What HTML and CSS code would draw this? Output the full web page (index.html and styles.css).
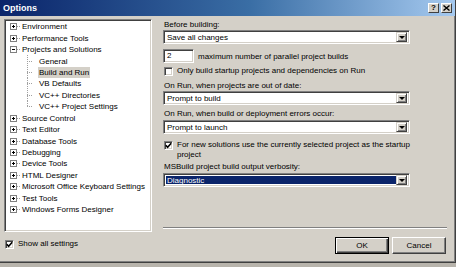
FILE: index.html
```html
<!DOCTYPE html>
<html lang="en">
<head>
  <meta charset="UTF-8">
  <title>Options</title>
  <link rel="stylesheet" href="styles.css">
</head>
<body>
  <div class="dialog">
    <div class="titlebar">
      <span class="title">Options</span>
      <div class="caption-btns">
        <span class="cap-btn help">?</span>
        <span class="cap-btn close">
          <svg width="7" height="6" viewBox="0 0 7 6"><path d="M0.5 0.5 L6.5 5.5 M6.5 0.5 L0.5 5.5" stroke="#000" stroke-width="1.4"/></svg>
        </span>
      </div>
    </div>

    <div class="body">
      <div class="left">
        <ul class="tree">
          <li class="node plus"><span class="box"></span><span class="lbl">Environment</span></li>
          <li class="node plus"><span class="box"></span><span class="lbl">Performance Tools</span></li>
          <li class="node minus"><span class="box"></span><span class="lbl">Projects and Solutions</span></li>
          <li class="child"><span class="lbl">General</span></li>
          <li class="child"><span class="lbl selected">Build and Run</span></li>
          <li class="child"><span class="lbl">VB Defaults</span></li>
          <li class="child"><span class="lbl">VC++ Directories</span></li>
          <li class="child last"><span class="lbl">VC++ Project Settings</span></li>
          <li class="node plus"><span class="box"></span><span class="lbl">Source Control</span></li>
          <li class="node plus"><span class="box"></span><span class="lbl">Text Editor</span></li>
          <li class="node plus"><span class="box"></span><span class="lbl">Database Tools</span></li>
          <li class="node plus"><span class="box"></span><span class="lbl">Debugging</span></li>
          <li class="node plus"><span class="box"></span><span class="lbl">Device Tools</span></li>
          <li class="node plus"><span class="box"></span><span class="lbl">HTML Designer</span></li>
          <li class="node plus"><span class="box"></span><span class="lbl">Microsoft Office Keyboard Settings</span></li>
          <li class="node plus"><span class="box"></span><span class="lbl">Test Tools</span></li>
          <li class="node plus"><span class="box"></span><span class="lbl">Windows Forms Designer</span></li>
        </ul>
        <div class="check-row show-all">
          <span class="checkbox checked">
            <svg width="7" height="7" viewBox="0 0 7 7"><path d="M0.8 3.2 L2.6 5.2 L6.2 1.2" fill="none" stroke="#000" stroke-width="1.6"/></svg>
          </span>
          <span>Show all settings</span>
        </div>
      </div>

      <div class="right">
        <div class="label">Before building:</div>
        <div class="combo">
          <span class="combo-text">Save all changes</span>
          <span class="drop"><span class="arrow"></span></span>
        </div>

        <div class="num-row">
          <span class="numbox">2</span>
          <span>maximum number of parallel project builds</span>
        </div>

        <div class="check-row opt1">
          <span class="checkbox"></span>
          <span>Only build startup projects and dependencies on Run</span>
        </div>

        <div class="label l2">On Run, when projects are out of date:</div>
        <div class="combo">
          <span class="combo-text">Prompt to build</span>
          <span class="drop"><span class="arrow"></span></span>
        </div>

        <div class="label l3">On Run, when build or deployment errors occur:</div>
        <div class="combo c3">
          <span class="combo-text">Prompt to launch</span>
          <span class="drop"><span class="arrow"></span></span>
        </div>

        <div class="check-row opt2">
          <span class="checkbox checked">
            <svg width="7" height="7" viewBox="0 0 7 7"><path d="M0.8 3.2 L2.6 5.2 L6.2 1.2" fill="none" stroke="#000" stroke-width="1.6"/></svg>
          </span>
          <span class="wrap">For new solutions use the currently selected project as the startup project</span>
        </div>

        <div class="label l4">MSBuild project build output verbosity:</div>
        <div class="combo c4">
          <span class="combo-text focused">Diagnostic</span>
          <span class="drop"><span class="arrow"></span></span>
        </div>

        <div class="spacer"></div>
        <div class="separator"></div>
        <div class="buttons">
          <button class="btn default">OK</button>
          <button class="btn">Cancel</button>
        </div>
      </div>
    </div>
  </div>
  <div class="under"></div>
</body>
</html>
```

FILE: styles.css
```css
* {
  box-sizing: border-box;
}

body {
  margin: 0;
  width: 456px;
  height: 267px;
  overflow: hidden;
  background: #8c8a86;
  font-family: 'Liberation Sans', Arial, sans-serif;
  font-size: 8px;
  color: #000;
}

.dialog {
  width: 456px;
  height: 263px;
  background: #d4d0c8;
  border-right: 1px solid #404040;
  border-bottom: 1px solid #404040;
  box-shadow: inset -1px -1px 0 #808080;
  display: flex;
  flex-direction: column;
}

/* title bar */
.titlebar {
  height: 16px;
  flex: none;
  display: flex;
  align-items: center;
  justify-content: space-between;
  padding: 0 3px 1px 3px;
  background: linear-gradient(to right, #0a246a, #3a6ea5 55%, #a6caf0);
}

.title {
  color: #fff;
  font-weight: bold;
  font-size: 9px;
}

.caption-btns {
  display: flex;
  gap: 2px;
}

.cap-btn {
  width: 11px;
  height: 10px;
  background: #d4d0c8;
  border-top: 1px solid #fff;
  border-left: 1px solid #fff;
  border-right: 1px solid #404040;
  border-bottom: 1px solid #404040;
  display: flex;
  align-items: center;
  justify-content: center;
  font-weight: bold;
  font-size: 8px;
  line-height: 1;
}

.body {
  flex: 1;
  display: flex;
}

/* left side */
.left {
  width: 160px;
  padding: 3px 0 0 4px;
  display: flex;
  flex-direction: column;
}

.tree {
  list-style: none;
  margin: 0;
  padding: 1px 0 0 5px;
  width: 148px;
  height: 213px;
  background: #fff;
  border-top: 1px solid #808080;
  border-left: 1px solid #808080;
  border-right: 1px solid #fff;
  border-bottom: 1px solid #fff;
  box-shadow: inset 1px 1px 0 #404040, inset -1px -1px 0 #d4d0c8;
}

.tree li {
  height: 11.44px;
  display: flex;
  align-items: center;
  white-space: nowrap;
}

.box {
  width: 7px;
  height: 7px;
  flex: none;
  border: 1px solid #808080;
  margin-right: 4px;
  background:
    linear-gradient(#000, #000) center / 3px 1px no-repeat,
    #fff;
}

.plus .box {
  background:
    linear-gradient(#000, #000) center / 3px 1px no-repeat,
    linear-gradient(#000, #000) center / 1px 3px no-repeat,
    #fff;
}

.node {
  background: repeating-linear-gradient(to right, #a0a0a0 0 1px, transparent 1px 2px) 7px 50% / 4px 1px no-repeat;
}

.node .lbl {
  padding-left: 1px;
}

.tree .child {
  padding-left: 28px;
  background:
    repeating-linear-gradient(to bottom, #a0a0a0 0 1px, transparent 1px 2px) 17px 0 / 1px 100% no-repeat,
    repeating-linear-gradient(to right, #a0a0a0 0 1px, transparent 1px 2px) 17px 50% / 6px 1px no-repeat;
}

.tree .child.last {
  background:
    repeating-linear-gradient(to bottom, #a0a0a0 0 1px, transparent 1px 2px) 17px 0 / 1px 50% no-repeat,
    repeating-linear-gradient(to right, #a0a0a0 0 1px, transparent 1px 2px) 17px 50% / 6px 1px no-repeat;
}

.child .lbl {
  padding: 0 1px;
  line-height: 11px;
}

.lbl.selected {
  background: #d4d0c8;
}

.check-row {
  display: flex;
  align-items: flex-start;
  gap: 4px;
  line-height: 10px;
}

.show-all {
  margin-top: 7px;
  padding-left: 1px;
}

.checkbox {
  width: 9px;
  height: 9px;
  flex: none;
  margin-top: 0.5px;
  background: #fff;
  border-top: 1px solid #808080;
  border-left: 1px solid #808080;
  border-right: 1px solid #fff;
  border-bottom: 1px solid #fff;
  box-shadow: inset 1px 1px 0 #404040, inset -1px -1px 0 #d4d0c8;
  display: flex;
  align-items: center;
  justify-content: center;
}

/* right side */
.right {
  flex: 1;
  padding: 3px 8px 0 3px;
  display: flex;
  flex-direction: column;
}

.label {
  line-height: 11px;
  padding-left: 1px;
}

.combo {
  width: 247px;
  height: 14px;
  background: #fff;
  border-top: 1px solid #808080;
  border-left: 1px solid #808080;
  border-right: 1px solid #fff;
  border-bottom: 1px solid #fff;
  box-shadow: inset 1px 1px 0 #404040, inset -1px -1px 0 #d4d0c8;
  display: flex;
  align-items: center;
  padding: 2px;
}

.combo-text {
  flex: 1;
  height: 100%;
  line-height: 10px;
  padding-left: 1px;
}

.combo-text.focused {
  background: #0a246a;
  color: #fff;
}

.drop {
  width: 11px;
  height: 10px;
  flex: none;
  background: #d4d0c8;
  border-top: 1px solid #d4d0c8;
  border-left: 1px solid #d4d0c8;
  border-right: 1px solid #404040;
  border-bottom: 1px solid #404040;
  box-shadow: inset 1px 1px 0 #fff, inset -1px -1px 0 #808080;
  display: flex;
  align-items: center;
  justify-content: center;
}

.arrow {
  width: 0;
  height: 0;
  border-left: 3px solid transparent;
  border-right: 3px solid transparent;
  border-top: 3px solid #000;
}

.num-row {
  display: flex;
  align-items: center;
  gap: 4px;
  margin-top: 5px;
}

.numbox {
  width: 31px;
  height: 14px;
  background: #fff;
  border-top: 1px solid #808080;
  border-left: 1px solid #808080;
  border-right: 1px solid #fff;
  border-bottom: 1px solid #fff;
  box-shadow: inset 1px 1px 0 #404040, inset -1px -1px 0 #d4d0c8;
  padding-left: 3px;
  line-height: 12px;
}

.opt1 {
  margin-top: 3px;
  padding-left: 1px;
}

.l2 {
  margin-top: 4px;
}

.l3 {
  margin-top: 3px;
}

.c3 {
  margin-top: 1px;
}

.opt2 {
  margin-top: 6px;
  padding-left: 1px;
  width: 270px;
}

.l4 {
  margin-top: 1px;
}

.c4 {
  margin-top: 1px;
}

.spacer {
  flex: 1;
}

.separator {
  height: 2px;
  border-top: 1px solid #808080;
  border-bottom: 1px solid #fff;
}

.buttons {
  display: flex;
  justify-content: flex-end;
  gap: 3px;
  margin: 8px 1px 8px 0;
}

.btn {
  width: 54px;
  height: 17px;
  padding: 0;
  font-family: inherit;
  font-size: 8px;
  color: #000;
  background: #d4d0c8;
  border-top: 1px solid #fff;
  border-left: 1px solid #fff;
  border-right: 1px solid #404040;
  border-bottom: 1px solid #404040;
  box-shadow: inset -1px -1px 0 #808080;
}

.btn.default {
  border: 1px solid #000;
  box-shadow: inset 1px 1px 0 #fff, inset -1px -1px 0 #404040, inset -2px -2px 0 #808080;
}

.under {
  height: 4px;
  background: #b8b4ac;
}
```
